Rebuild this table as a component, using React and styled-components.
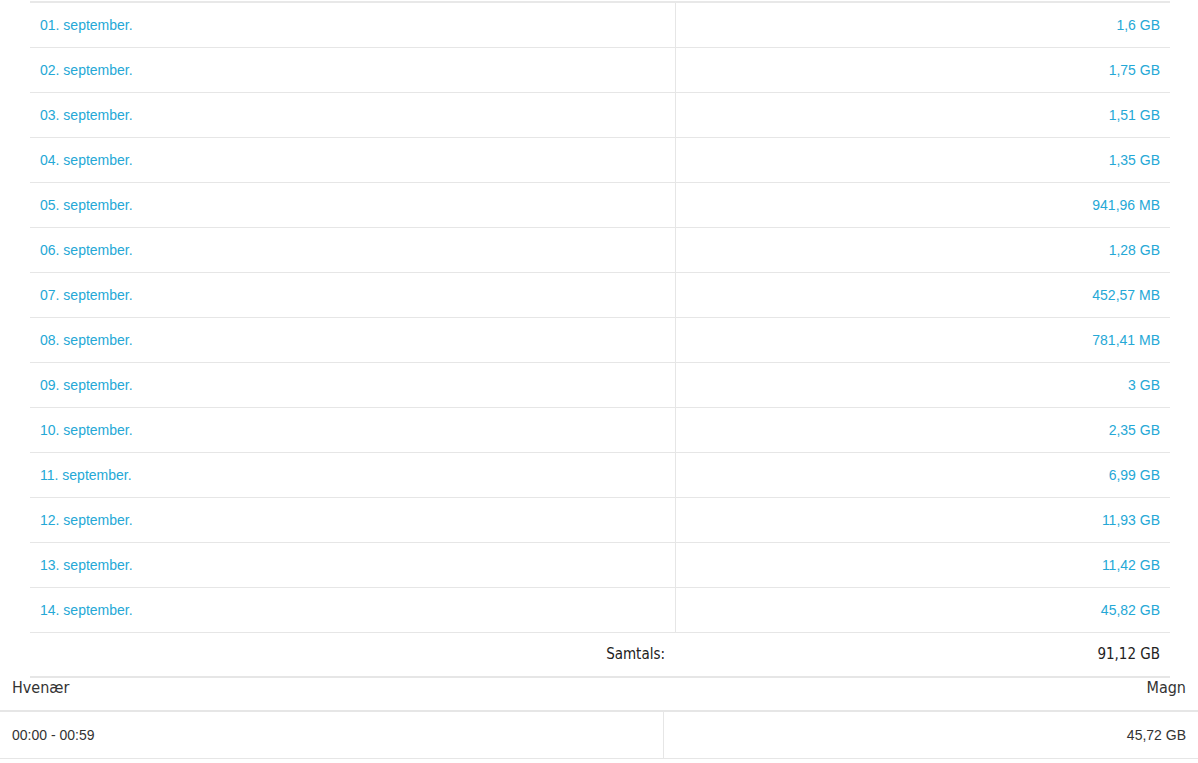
import React from 'react';
import styled, { createGlobalStyle } from 'styled-components';

const GlobalStyle = createGlobalStyle`
  body {
    margin: 0;
    background: #fff;
    font-family: Arial, "Liberation Sans", sans-serif;
  }
`;

const Page = styled.div`
  width: 1198px;
  padding-top: 1px;
`;

const DayTable = styled.table`
  margin-left: 30px;
  width: 1140px;
  border-collapse: collapse;
  border-top: 2px solid #e8e8e8;
  table-layout: fixed;
`;

const DayRow = styled.tr`
  border-bottom: 1px solid #e6e6e6;
`;

const DayCell = styled.td`
  height: 45px;
  padding: 0 10px;
  box-sizing: border-box;
  font-size: 14px;
  color: #25a8d6;
  text-align: ${(p) => (p.$right ? 'right' : 'left')};
  border-left: ${(p) => (p.$divider ? '1px solid #e6e6e6' : 'none')};
  vertical-align: middle;
`;

const TotalRow = styled.tr`
  border-bottom: 2px solid #e6e6e6;
`;

const TotalCell = styled.td`
  height: 45px;
  padding: 0 10px;
  box-sizing: border-box;
  text-align: right;
  font-family: "DejaVu Sans Condensed", "DejaVu Sans", sans-serif;
  font-stretch: condensed;
  font-size: 15px;
  color: #222;
`;

const HourTable = styled.table`
  width: 1198px;
  border-collapse: collapse;
  table-layout: fixed;
`;

const HeadCell = styled.th`
  height: 33px;
  padding: 0 12px 12px;
  box-sizing: border-box;
  font-family: "DejaVu Sans Condensed", "DejaVu Sans", sans-serif;
  font-stretch: condensed;
  font-weight: normal;
  font-size: 16px;
  line-height: 20px;
  color: #333;
  text-align: ${(p) => (p.$right ? 'right' : 'left')};
  border-bottom: 2px solid #e6e6e6;
`;

const HourRow = styled.tr`
  border-bottom: 1px solid #e6e6e6;
`;

const HourCell = styled.td`
  height: 47px;
  padding: 0 12px;
  box-sizing: border-box;
  font-size: 14px;
  color: #333;
  text-align: ${(p) => (p.$right ? 'right' : 'left')};
  border-left: ${(p) => (p.$divider ? '1px solid #e6e6e6' : 'none')};
`;

const days = [
  ['01. september.', '1,6 GB'],
  ['02. september.', '1,75 GB'],
  ['03. september.', '1,51 GB'],
  ['04. september.', '1,35 GB'],
  ['05. september.', '941,96 MB'],
  ['06. september.', '1,28 GB'],
  ['07. september.', '452,57 MB'],
  ['08. september.', '781,41 MB'],
  ['09. september.', '3 GB'],
  ['10. september.', '2,35 GB'],
  ['11. september.', '6,99 GB'],
  ['12. september.', '11,93 GB'],
  ['13. september.', '11,42 GB'],
  ['14. september.', '45,82 GB'],
];

export default function App() {
  return (
    <Page>
      <GlobalStyle />
      <DayTable>
        <colgroup>
          <col style={{ width: 645 }} />
          <col style={{ width: 495 }} />
        </colgroup>
        <tbody>
          {days.map(([day, size]) => (
            <DayRow key={day}>
              <DayCell>{day}</DayCell>
              <DayCell $right $divider>{size}</DayCell>
            </DayRow>
          ))}
          <TotalRow>
            <TotalCell>Samtals:</TotalCell>
            <TotalCell>91,12 GB</TotalCell>
          </TotalRow>
        </tbody>
      </DayTable>
      <HourTable>
        <colgroup>
          <col style={{ width: 663 }} />
          <col style={{ width: 535 }} />
        </colgroup>
        <thead>
          <tr>
            <HeadCell>Hvenær</HeadCell>
            <HeadCell $right>Magn</HeadCell>
          </tr>
        </thead>
        <tbody>
          <HourRow>
            <HourCell>00:00 - 00:59</HourCell>
            <HourCell $right $divider>45,72 GB</HourCell>
          </HourRow>
        </tbody>
      </HourTable>
    </Page>
  );
}
